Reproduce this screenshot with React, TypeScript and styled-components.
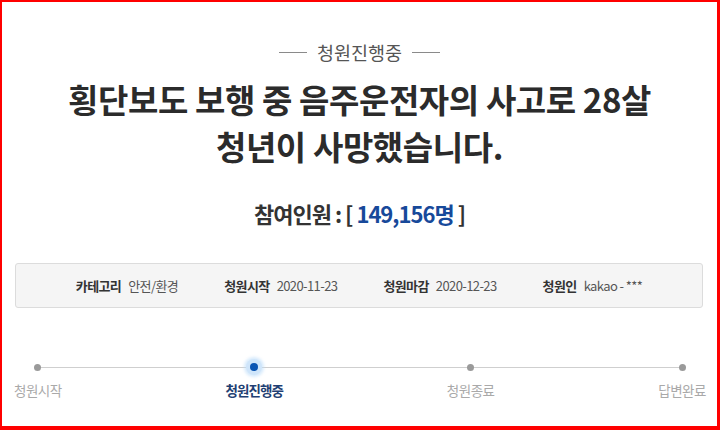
import React from "react";
import styled, { createGlobalStyle } from "styled-components";

const GlobalStyle = createGlobalStyle`
  html, body { margin: 0; padding: 0; background: #fff; }
  body { font-family: "Noto Sans CJK KR", "Noto Sans", sans-serif; }
`;

const Page = styled.div`
  box-sizing: border-box;
  width: 720px;
  height: 430px;
  border-style: solid;
  border-color: #ff0000;
  border-width: 2px 3px 4px 2px;
  display: flex;
  flex-direction: column;
  align-items: center;
  padding-top: 40px;
  background: #fff;
  overflow: hidden;
`;

const StatusTag = styled.div`
  display: flex;
  align-items: center;
  gap: 10px;
  font-size: 18.5px;
  line-height: 20px;
  color: #555;
  &::before, &::after {
    content: "";
    display: block;
    width: 28px;
    height: 1px;
    background: #8a8a8a;
  }
`;

const Title = styled.h1`
  margin: 14px 0 0;
  font-size: 33px;
  line-height: 47px;
  font-weight: 700;
  color: #2b2b2b;
  text-align: center;
  letter-spacing: -0.4px;
`;

const Count = styled.div`
  margin-top: 28px;
  font-size: 22px;
  line-height: 30px;
  font-weight: 700;
  color: #333;
  letter-spacing: -1px;
`;

const Num = styled.span`
  color: #17499a;
`;

const InfoBox = styled.div`
  box-sizing: border-box;
  align-self: stretch;
  margin: 35px 14px 0 13px;
  height: 45px;
  border: 1px solid #dcdcdc;
  border-radius: 3px;
  background: #f5f5f5;
  display: flex;
  justify-content: center;
  align-items: center;
  gap: 46px;
`;

const InfoItem = styled.div`
  display: flex;
  align-items: center;
  gap: 7px;
  font-size: 13px;
  line-height: 18px;
  letter-spacing: -0.6px;
`;

const InfoLabel = styled.span`
  font-weight: 700;
  color: #333;
`;

const InfoValue = styled.span`
  color: #555;
`;

const Timeline = styled.div`
  position: relative;
  align-self: stretch;
  margin: 50px 11px 0 12px;
  display: flex;
  justify-content: space-between;
  &::before {
    content: "";
    position: absolute;
    top: 9px;
    left: 23px;
    right: 23px;
    height: 1px;
    background: #cfcfcf;
  }
`;

const Step = styled.div`
  position: relative;
  display: flex;
  flex-direction: column;
  align-items: center;
  gap: 5px;
`;

const DotWrap = styled.div`
  width: 18px;
  height: 18px;
  display: flex;
  align-items: center;
  justify-content: center;
`;

const Dot = styled.span<{ $active?: boolean }>`
  display: block;
  width: ${(p) => (p.$active ? 8 : 7)}px;
  height: ${(p) => (p.$active ? 8 : 7)}px;
  border-radius: 50%;
  background: ${(p) => (p.$active ? "#0a55b3" : "#9a9a9a")};
  box-shadow: ${(p) =>
    p.$active ? "0 0 0 4px #cfe5fa, 0 0 3px 6px rgba(190, 222, 250, 0.6)" : "none"};
`;

const StepLabel = styled.span<{ $active?: boolean }>`
  font-size: 13.5px;
  line-height: 18px;
  letter-spacing: ${(p) => (p.$active ? "-0.9px" : "-0.5px")};
  color: ${(p) => (p.$active ? "#1f3f73" : "#a9a9a9")};
  font-weight: ${(p) => (p.$active ? 700 : 400)};
`;

const steps = [
  { label: "청원시작" },
  { label: "청원진행중", active: true },
  { label: "청원종료" },
  { label: "답변완료" },
];

const info = [
  { label: "카테고리", value: "안전/환경" },
  { label: "청원시작", value: "2020-11-23" },
  { label: "청원마감", value: "2020-12-23" },
  { label: "청원인", value: "kakao - ***" },
];

export default function App() {
  return (
    <>
      <GlobalStyle />
      <Page>
        <StatusTag>청원진행중</StatusTag>
        <Title>
          횡단보도 보행 중 음주운전자의 사고로 28살
          <br />
          청년이 사망했습니다.
        </Title>
        <Count>
          참여인원 : [ <Num>149,156명</Num> ]
        </Count>
        <InfoBox>
          {info.map((i) => (
            <InfoItem key={i.label}>
              <InfoLabel>{i.label}</InfoLabel>
              <InfoValue>{i.value}</InfoValue>
            </InfoItem>
          ))}
        </InfoBox>
        <Timeline>
          {steps.map((s) => (
            <Step key={s.label}>
              <DotWrap>
                <Dot $active={s.active} />
              </DotWrap>
              <StepLabel $active={s.active}>{s.label}</StepLabel>
            </Step>
          ))}
        </Timeline>
      </Page>
    </>
  );
}
